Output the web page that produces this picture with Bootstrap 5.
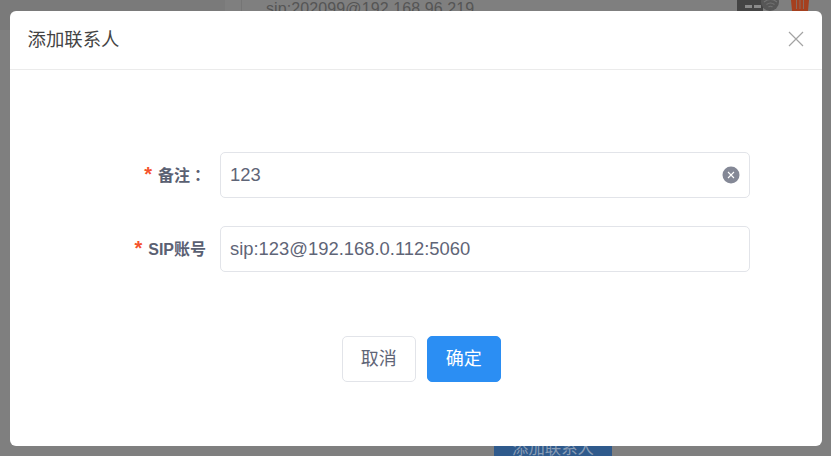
<!DOCTYPE html>
<html lang="zh">
<head>
<meta charset="utf-8">
<title>添加联系人</title>
<link href="https://cdn.jsdelivr.net/npm/bootstrap@5.3.0/dist/css/bootstrap.min.css" rel="stylesheet">
<style>
html,body{height:456px;overflow:hidden;}
body{background:#7f7f7f;font-family:"Liberation Sans","Noto Sans CJK SC",sans-serif;position:relative;}
.bg-layer{position:absolute;inset:0;overflow:hidden;}
.bg-side{position:absolute;left:0;top:0;width:225px;height:30px;background:#7a7a7a;}
.bg-line{position:absolute;left:241px;top:0;width:1px;height:30px;background:#757575;}
.bg-sip{position:absolute;left:266px;top:-1px;font-size:16px;letter-spacing:.1px;line-height:20px;color:#555;white-space:nowrap;}
.bg-dev{position:absolute;left:737px;top:0;width:26px;height:30px;background:#444;}
.bg-dash{position:absolute;top:5px;width:7px;height:3px;background:#8a8a8a;}
.bg-dash-a{left:745px;}
.bg-dash-b{left:754px;}
.bg-wifi{position:absolute;left:761px;top:-7px;width:18px;height:18px;border-radius:50%;background:#575757;}
.bg-wifi-svg{position:absolute;left:762.500px;top:-1px;width:15px;height:11px;}
.bg-trash{position:absolute;left:791px;top:0;width:18px;height:30px;}
.bg-add{position:absolute;left:494px;top:425px;width:118px;height:31px;padding-top:15px;background:#2f5a8c;color:#8a9db5;font-size:16.4px;line-height:17px;text-align:center;white-space:nowrap;}
.dlg{position:absolute;left:9.5px;top:11px;width:812.5px;height:435px;background:#fff;border-radius:6px;}
.dlg-head{height:59px;padding:0 18px;border-bottom:1px solid #ebebeb;}
.dlg-title{font-size:18.4px;line-height:24px;color:#444;font-weight:400;margin:0 0 1px;}
.dlg-x{width:16px;height:16px;padding:0;border:0;background:none;display:block;margin-bottom:2px;}
.dlg-x svg{display:block;}
.dlg-form{padding:82px 72px 0 0;}
.f-row{height:46px;margin-bottom:28px;}
.f-label{width:210.5px;flex:none;padding-right:14px;text-align:right;font-size:16px;line-height:20px;font-weight:700;color:#5a6072;white-space:nowrap;}
.f-star{color:#f5532d;font-size:20px;line-height:20px;margin-right:6px;font-weight:700;}
.f-colon{font-family:"Noto Sans CJK TC",sans-serif;}
.f-box{flex:1;height:46px;border:1px solid #e2e4e9;border-radius:5px;padding:0 9px;font-size:18.4px;color:#5f6577;position:relative;}
.f-clear{position:absolute;right:9px;top:13px;width:18px;height:18px;display:block;}
.dlg-foot{padding-top:36px;padding-left:11px;gap:11px;}
.b-cancel,.b-ok{width:74px;height:46px;border-radius:5px;font-size:18px;padding:0;line-height:1;}
.b-cancel{background:#fff;border:1px solid #e2e4e9;color:#5f6577;}
.b-ok{background:#2b8ef3;border:1px solid #2b8ef3;color:#fff;}
</style>
</head>
<body>
<div class="bg-layer">
  <div class="bg-side"></div>
  <div class="bg-line"></div>
  <div class="bg-sip">sip:202099@192.168.96.219</div>
  <div class="bg-dev"></div>
  <div class="bg-dash bg-dash-a"></div>
  <div class="bg-dash bg-dash-b"></div>
  <div class="bg-wifi"></div>
  <svg class="bg-wifi-svg" viewBox="0 0 15 11"><path d="M1 3Q7.5-2 14 3M3.500 5.500Q7.500 2.500 11.500 5.500M5.500 8Q7.500 6.500 9.500 8" stroke="#727272" stroke-width="1.200" fill="none"/></svg>
  <svg class="bg-trash" viewBox="0 0 18 30"><path d="M0 0H18L17 11H1Z" fill="#a5401f"/><path d="M5.500 0V9M9 0V9M12.500 0V9" stroke="#8a6a5e" stroke-width="1"/></svg>
  <div class="bg-add">添加联系人</div>
</div>
<div class="dlg">
  <div class="dlg-head d-flex align-items-center justify-content-between">
    <h5 class="dlg-title">添加联系人</h5>
    <button class="dlg-x" type="button" aria-label="关闭"><svg width="16" height="16" viewBox="0 0 16 16"><path d="M1 1L15 15M15 1L1 15" stroke="#a3a3a3" stroke-width="1.2" fill="none"/></svg></button>
  </div>
  <div class="dlg-form">
    <div class="f-row d-flex align-items-center">
      <div class="f-label"><span class="f-star">*</span>备注<span class="f-colon" lang="zh-TW">：</span></div>
      <div class="f-box d-flex align-items-center">123
        <svg class="f-clear" viewBox="0 0 18 18"><circle cx="9" cy="9" r="8.500" fill="#848896"/><path d="M6 6L12 12M12 6L6 12" stroke="#fff" stroke-width="1.100"/></svg>
      </div>
    </div>
    <div class="f-row d-flex align-items-center">
      <div class="f-label"><span class="f-star">*</span>SIP账号</div>
      <div class="f-box d-flex align-items-center">sip:123@192.168.0.112:5060</div>
    </div>
  </div>
  <div class="dlg-foot d-flex justify-content-center">
    <button class="b-cancel" type="button">取消</button>
    <button class="b-ok" type="button">确定</button>
  </div>
</div>
<script src="https://cdn.jsdelivr.net/npm/bootstrap@5.3.0/dist/js/bootstrap.bundle.min.js"></script>
</body>
</html>
